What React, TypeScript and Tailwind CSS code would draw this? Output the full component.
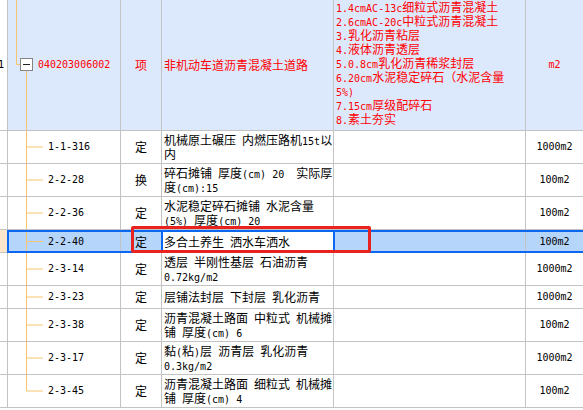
const LINE = '#f8c46e';

type Row = {
  code: string;
  type: string;
  name: string[];
  unit: string;
  short?: boolean;
  selected?: boolean;
  last?: boolean;
};

const rows: Row[] = [
  { code: '1-1-316', type: '定', name: ['机械原土碾压 内燃压路机15t以', '内'], unit: '1000m2' },
  { code: '2-2-28', type: '换', name: ['碎石摊铺 厚度(cm) 20  实际厚', '度(cm):15'], unit: '100m2' },
  { code: '2-2-36', type: '定', name: ['水泥稳定碎石摊铺 水泥含量', '(5%) 厚度(cm) 20'], unit: '100m2' },
  { code: '2-2-40', type: '定', name: ['多合土养生 洒水车洒水'], unit: '100m2', short: true, selected: true },
  { code: '2-3-14', type: '定', name: ['透层 半刚性基层 石油沥青', '0.72kg/m2'], unit: '1000m2' },
  { code: '2-3-23', type: '定', name: ['层铺法封层 下封层 乳化沥青'], unit: '1000m2', short: true },
  { code: '2-3-38', type: '定', name: ['沥青混凝土路面 中粒式 机械摊', '铺 厚度(cm) 6'], unit: '100m2' },
  { code: '2-3-17', type: '定', name: ['黏(粘)层 沥青层 乳化沥青', '0.3kg/m2'], unit: '1000m2' },
  { code: '2-3-45', type: '定', name: ['沥青混凝土路面 细粒式 机械摊', '铺 厚度(cm) 4'], unit: '100m2', last: true },
];

const features = [
  '1.4cmAC-13c细粒式沥青混凝土',
  '2.6cmAC-20c中粒式沥青混凝土',
  '3.乳化沥青粘层',
  '4.液体沥青透层',
  '5.0.8cm乳化沥青稀浆封层',
  '6.20cm水泥稳定碎石（水泥含量',
  '5%)',
  '7.15cm厚级配碎石',
  '8.素土夯实',
];

// latin runs get a half-width mono face, like the old grid control
function Mixed({ text }: { text: string }) {
  const parts = text.split(/([\x20-\x7e]+)/).filter(Boolean);
  return (
    <>
      {parts.map((p, i) =>
        /^[\x20-\x7e]+$/.test(p) ? (
          <span key={i} className="font-['DejaVu_Sans_Mono',monospace] text-[10px] leading-none">{p}</span>
        ) : (
          <span key={i}>{p}</span>
        )
      )}
    </>
  );
}

// tree connector for a child row; shift moves it left when the cell has a thicker border
function Branch({ last, shift = 0 }: { last?: boolean; shift?: number }) {
  const x = 18.5 - shift;
  return (
    <svg width={40 - shift} height="100%" className="shrink-0 block">
      <line x1={x} y1="0" x2={x} y2={last ? '50%' : '100%'} stroke={LINE} strokeWidth="1" />
      <line x1={x} y1="50%" x2={35 - shift} y2="50%" stroke={LINE} strokeWidth="1" />
    </svg>
  );
}

function Lines({ lines }: { lines: string[] }) {
  return (
    <>
      {lines.map((l, i) => (
        <div key={i} className="whitespace-pre h-[14px] leading-[14px]">
          <Mixed text={l} />
        </div>
      ))}
    </>
  );
}

function ParentRow() {
  return (
    <div className="flex h-[131px] border-b border-[#c3c3c3]">
      <div className="w-[8px] shrink-0 border-r border-[#c3c3c3] bg-white overflow-hidden flex items-center justify-end pr-[3px]">
        <span className="font-['DejaVu_Sans_Mono',monospace] text-[10px] leading-none">1</span>
      </div>
      <div className="w-[113px] shrink-0 border-r border-[#c3c3c3] bg-[#dce9fd] flex items-center">
        <svg width="30" height="130" className="shrink-0 block">
          <line x1="8.5" y1="0" x2="8.5" y2="64.5" stroke={LINE} />
          <line x1="8.5" y1="64.5" x2="12" y2="64.5" stroke={LINE} />
          <line x1="18.5" y1="71" x2="18.5" y2="130" stroke={LINE} />
          <rect x="12.5" y="58.5" width="12" height="12" fill="#fff" stroke="#858585" />
          <line x1="15" y1="64.5" x2="22" y2="64.5" stroke="#222" />
        </svg>
        <span className="text-[#ff0000] font-['DejaVu_Sans_Mono',monospace] text-[10px] leading-none">040203006002</span>
      </div>
      <div className="w-[41px] shrink-0 border-r border-[#c3c3c3] bg-[#dce9fd] flex items-center justify-center text-[#ff0000]">
        项
      </div>
      <div className="w-[172px] shrink-0 border-r border-[#c3c3c3] bg-[#dce9fd] flex items-center pl-[2px] text-[#ff0000]">
        <span className="leading-[14px]">非机动车道沥青混凝土道路</span>
      </div>
      <div className="w-[192px] shrink-0 border-r border-[#c3c3c3] bg-[#dce9fd] pl-[2px] text-[#ff0000] overflow-hidden">
        <Lines lines={features} />
      </div>
      <div className="flex-1 bg-[#dce9fd] flex items-center justify-center text-[#ff0000]">
        <span className="font-['DejaVu_Sans_Mono',monospace] text-[10px] leading-none">m2</span>
      </div>
    </div>
  );
}

function ChildRow({ row }: { row: Row }) {
  const h = row.short ? 'h-[23px]' : 'h-[33px]';
  return (
    <div className={`flex ${h} border-b border-[#c3c3c3] bg-white`}>
      <div className="w-[8px] shrink-0 border-r border-[#c3c3c3]" />
      <div className="w-[113px] shrink-0 border-r border-[#c3c3c3] flex items-center">
        <Branch last={row.last} />
        <span className="font-['DejaVu_Sans_Mono',monospace] text-[10px] leading-none">{row.code}</span>
      </div>
      <div className="w-[41px] shrink-0 border-r border-[#c3c3c3] flex items-center justify-center">{row.type}</div>
      <div className="w-[172px] shrink-0 border-r border-[#c3c3c3] flex flex-col justify-center pl-[2px] overflow-hidden">
        <Lines lines={row.name} />
      </div>
      <div className="w-[192px] shrink-0 border-r border-[#c3c3c3]" />
      <div className="flex-1 flex items-center justify-center">
        <span className="font-['DejaVu_Sans_Mono',monospace] text-[10px] leading-none">{row.unit}</span>
      </div>
    </div>
  );
}

function SelectedRow({ row }: { row: Row }) {
  return (
    <div className="flex h-[23px]">
      <div className="w-[7px] shrink-0 bg-[#fde6cc] border-b border-[#c3c3c3]" />
      <div className="flex-1 flex border-y-2 border-l-2 border-[#0b66f2] bg-[#b5d5fb]">
        <div className="w-[112px] shrink-0 border-r border-[#c3c3c3] flex items-center">
          <Branch shift={1} />
          <span className="font-['DejaVu_Sans_Mono',monospace] text-[10px] leading-none">{row.code}</span>
        </div>
        <div className="w-[40px] shrink-0 flex items-center justify-center">{row.type}</div>
        <div className="w-[174px] shrink-0 border-x-2 border-[#0b66f2] bg-white flex items-center pl-[1px]">
          <Lines lines={row.name} />
        </div>
        <div className="w-[191px] shrink-0 border-r border-[#c3c3c3]" />
        <div className="flex-1 flex items-center justify-center">
          <span className="font-['DejaVu_Sans_Mono',monospace] text-[10px] leading-none">{row.unit}</span>
        </div>
      </div>
    </div>
  );
}

export default function App() {
  return (
    <div className="relative w-[583px] h-[410px] overflow-hidden bg-white text-[12px] text-black font-['Noto_Sans_CJK_SC',sans-serif]">
      <ParentRow />
      {rows.map((r) => (r.selected ? <SelectedRow key={r.code} row={r} /> : <ChildRow key={r.code} row={r} />))}

      {/* red annotation box */}
      <div className="absolute left-[131px] top-[226px] w-[240px] h-[27px] border-[3px] border-[#e8221e] rounded-[2px]" />
    </div>
  );
}
